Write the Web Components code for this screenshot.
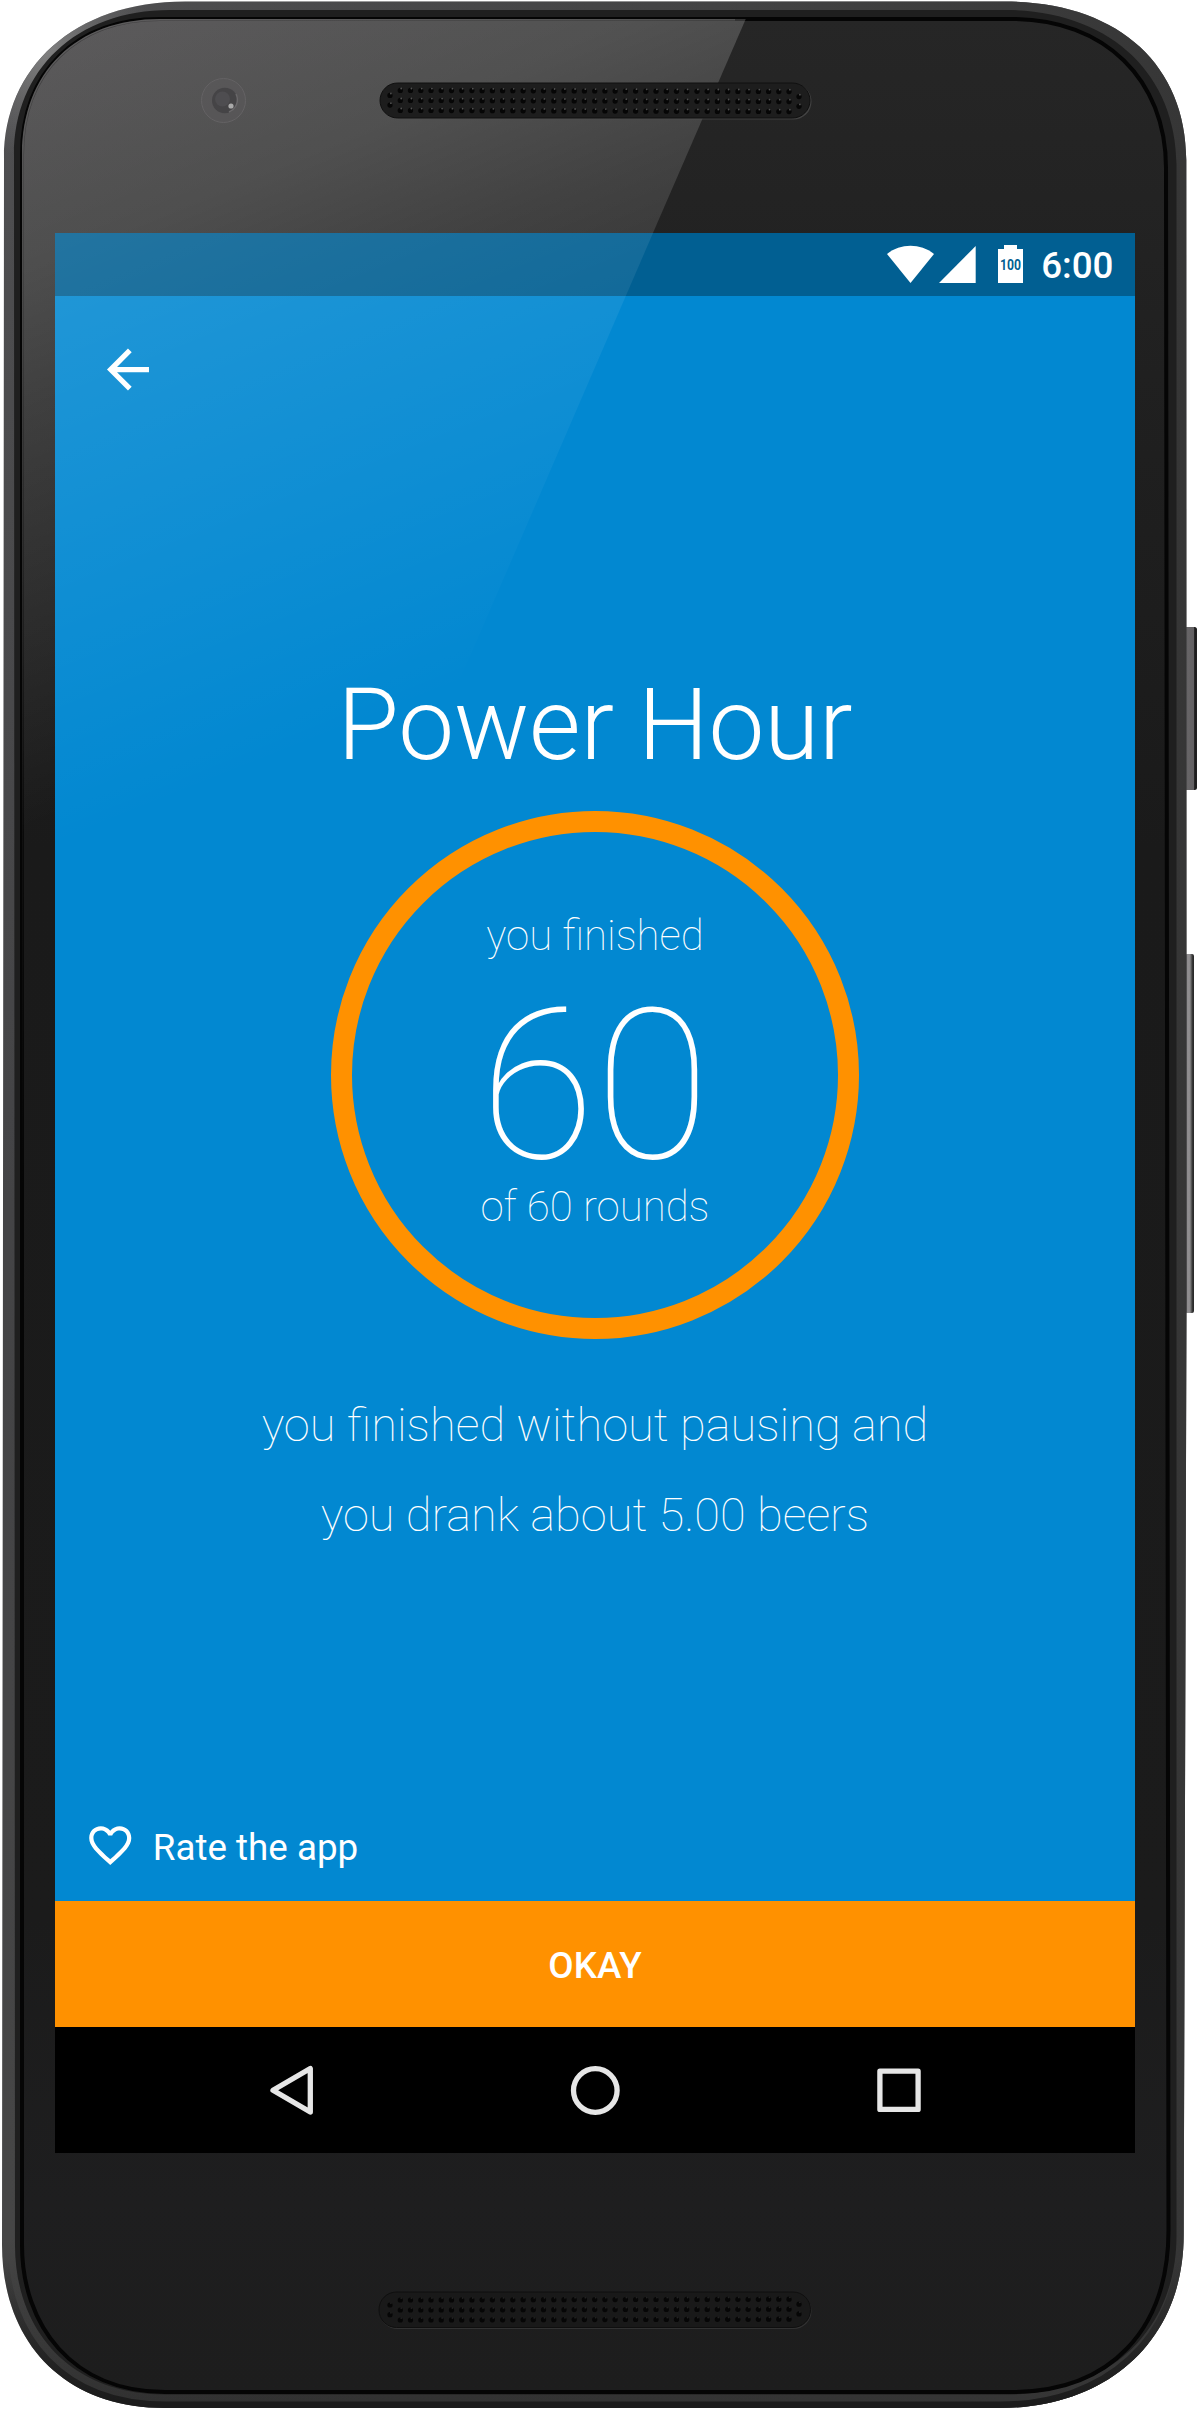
<!DOCTYPE html>
<html lang="en">
<head>
<meta charset="utf-8">
<title>Power Hour</title>
<style>
  html, body { margin: 0; padding: 0; background: #fff; }
  body { width: 1198px; height: 2409px; overflow: hidden; font-family: Roboto, "Noto Sans", sans-serif; color: #fff; }
</style>
</head>
<body>
<phone-frame>
  <app-screen>
    <status-bar time="6:00" level="100"></status-bar>
    <app-content>
      <back-button></back-button>
      <page-title>Power Hour</page-title>
      <round-ring>
        <span slot="before">you finished</span>
        <span slot="count">60</span>
        <span slot="after">of 60 rounds</span>
      </round-ring>
      <summary-lines>
        <div>you finished without pausing and</div>
        <div>you drank about 5.00 beers</div>
      </summary-lines>
      <rate-link>Rate the app</rate-link>
    </app-content>
    <okay-button>OKAY</okay-button>
    <nav-bar></nav-bar>
  </app-screen>
</phone-frame>
<script>
  const define = (name, html) => {
    const tpl = document.createElement('template');
    tpl.innerHTML = html;
    customElements.define(name, class extends HTMLElement {
      constructor() {
        super();
        this.attachShadow({ mode: 'open' }).append(tpl.content.cloneNode(true));
        this.shadowRoot.querySelectorAll('[data-attr]').forEach(n => {
          n.textContent = this.getAttribute(n.dataset.attr);
        });
      }
    });
  };

  /* Perforated grille: 39 columns of three holes, with a pair at each end. */
  const grille = (y, tilt, light) => {
    let s = '';
    const hole = (x, cy) => {
      s += `<circle cx="${x.toFixed(1)}" cy="${cy.toFixed(1)}" r="2.6" fill="#060606"/>` +
           `<circle cx="${(x + .9).toFixed(1)}" cy="${(cy - 1.9).toFixed(1)}" r=".9" fill="${light}"/>`;
    };
    for (let i = 0; i < 39; i++)
      for (let r = 0; r < 3; r++) hole(400.3 + i * 10.23, y + r * 10 + tilt * i / 38);
    hole(390, y + 5); hole(390, y + 14.7);
    hole(799, y + 5 + tilt); hole(799, y + 14.7 + tilt);
    return s;
  };

  define('phone-frame', `
    <style>
      :host { display: block; position: relative; box-sizing: border-box; width: 1198px; height: 2409px; padding: 233px 63px 256px 55px; }
      .art { position: absolute; left: 0; top: 0; }
      .shine { pointer-events: none; z-index: 2; }
      ::slotted(*) { position: relative; z-index: 1; }
    </style>
    <svg class="art" width="1198" height="2409" viewBox="0 0 1198 2409">
      <defs>
        <linearGradient id="rim" x1="0" y1="0" x2="0" y2="1">
          <stop offset="0" stop-color="#505052"/><stop offset=".5" stop-color="#444446"/><stop offset=".93" stop-color="#464646"/><stop offset="1" stop-color="#303030"/>
        </linearGradient>
        <linearGradient id="rimr" x1="0" y1="0" x2="1" y2="0">
          <stop offset="0" stop-color="#333" stop-opacity="0"/><stop offset=".6" stop-color="#363636" stop-opacity=".5"/><stop offset="1" stop-color="#363636"/>
        </linearGradient>
        <radialGradient id="corner" gradientUnits="userSpaceOnUse" cx="45" cy="50" r="110">
          <stop offset="0" stop-color="#8a8a8a" stop-opacity=".85"/><stop offset="1" stop-color="#777" stop-opacity="0"/>
        </radialGradient>
        <linearGradient id="face" x1="0" y1="0" x2="0" y2="1">
          <stop offset="0" stop-color="#262626"/><stop offset=".15" stop-color="#202020"/><stop offset=".35" stop-color="#1a1a1a"/><stop offset=".8" stop-color="#1b1b1b"/><stop offset=".92" stop-color="#1e1e1f"/><stop offset="1" stop-color="#1d1d1d"/>
        </linearGradient>
        <linearGradient id="glare" gradientUnits="userSpaceOnUse" x1="0" y1="0" x2="289" y2="725">
          <stop offset="0" stop-color="#fcf6fc" stop-opacity=".26"/><stop offset=".33" stop-color="#fff" stop-opacity=".2"/><stop offset=".5" stop-color="#fff" stop-opacity=".14"/><stop offset="1" stop-color="#fff" stop-opacity="0"/>
        </linearGradient>
        <linearGradient id="edge" gradientUnits="userSpaceOnUse" x1="0" y1="20" x2="0" y2="1200">
          <stop offset="0" stop-color="#fff" stop-opacity=".14"/><stop offset="1" stop-color="#fff" stop-opacity="0"/>
        </linearGradient>
        <linearGradient id="lower" gradientUnits="userSpaceOnUse" x1="0" y1="2260" x2="0" y2="2400">
          <stop offset="0" stop-color="#1c1c1c" stop-opacity="0"/><stop offset="1" stop-color="#1c1c1c"/>
        </linearGradient>
        <linearGradient id="pw"><stop offset="0" stop-color="#555"/><stop offset=".3" stop-color="#676567"/><stop offset=".75" stop-color="#626062"/><stop offset=".82" stop-color="#1a1a1a"/><stop offset="1" stop-color="#222"/></linearGradient>
        <linearGradient id="vl"><stop offset="0" stop-color="#5a5a5a"/><stop offset=".3" stop-color="#929092"/><stop offset=".55" stop-color="#8c8a8c"/><stop offset=".72" stop-color="#555"/><stop offset=".9" stop-color="#222"/><stop offset="1" stop-color="#333"/></linearGradient>
        <clipPath id="faceclip"><path d="M160 19 H1012 C1105 19 1166 80 1166 168 L1168.500 2230 C1168.500 2330 1110 2392 1012 2392 H165 C72 2392 22 2325 22 2245 L22 155 C22 72 76 19 160 19Z"/></clipPath>
        <clipPath id="bodyclip"><use href="#outer"/></clipPath>
      </defs>
      <rect x="1184" y="627" width="13" height="163" rx="2.500" fill="url(#pw)"/>
      <rect x="1185" y="954" width="9" height="359" rx="2" fill="url(#vl)"/>
      <path id="outer" d="M185 1.500 H1005 C1115 1.500 1186 62 1186.300 160 L1186.500 1300 L1183.700 2235 C1183.700 2342 1106 2408 1000 2408 H165 C62 2408 2 2340 2 2245 L4 158 C4 68 74 1.500 185 1.500Z" fill="url(#rim)"/>
      <path d="M185 1.500 H1005 C1115 1.500 1186 62 1186.300 160 L1186.500 1300 L1183.700 2235 C1183.700 2342 1106 2408 1000 2408 H165 C62 2408 2 2340 2 2245 L4 158 C4 68 74 1.500 185 1.500Z" fill="url(#rimr)"/>
      <path d="M185 1.500 H300 V200 H4 V158 C4 68 74 1.500 185 1.500Z" fill="url(#corner)"/>
      <g clip-path="url(#bodyclip)">
        <path d="M2 2245 C2 2340 62 2408 165 2408 H1000 C1106 2408 1183.700 2342 1183.700 2235" fill="none" stroke="url(#lower)" stroke-width="13"/>
      </g>
      <path d="M170 10 H1005 C1108 10 1176 72 1176.500 165 L1176.500 2235 C1176.500 2335 1104 2394.500 1006 2394.500 H165 C70 2394.500 15 2330 15 2245 L14 155 C14 70 76 10 170 10Z" fill="#1f1f1f"/>
      <path d="M160 19 H1012 C1105 19 1166 80 1166 168 L1168.500 2230 C1168.500 2330 1110 2392 1012 2392 H165 C72 2392 22 2325 22 2245 L22 155 C22 72 76 19 160 19Z" fill="url(#face)" stroke="#050505" stroke-width="4"/>
      <g clip-path="url(#faceclip)">
        <path d="M0 0 H754 L381 860 H0Z" fill="url(#glare)"/>
        <path d="M735 19.500 H160 C76 19.500 22.500 72 22.500 155 V1200" fill="none" stroke="url(#edge)" stroke-width="2"/>
      </g>
      <circle cx="223.500" cy="100.500" r="22" fill="#5a585a" fill-opacity=".6" stroke="#646264" stroke-width="1"/>
      <circle cx="224.800" cy="100.500" r="12.800" fill="#454446"/>
      <circle cx="222.500" cy="99" r="7.500" fill="#4e4d50"/>
      <path d="M229 112 A13 13 0 0 0 236 94" fill="none" stroke="#6a686a" stroke-width="1.500"/>
      <circle cx="231" cy="106" r="2.600" fill="#aaa"/>
      <rect x="380.500" y="83.500" width="431" height="36" rx="18" fill="#555" opacity=".6"/>
      <rect x="380" y="83" width="430" height="35" rx="17.500" fill="#1d1d1d" stroke="#101010" stroke-width="1"/>
      <rect x="379.500" y="2293" width="432" height="36" rx="18" fill="#3a3a3a" opacity=".7"/>
      <rect x="379" y="2292" width="431.500" height="35.500" rx="17.500" fill="#191919" stroke="#0f0f0f" stroke-width="1"/>
      ${grille(90.4, 1.2, '#505050')}
      ${grille(2300, -.8, '#222')}
    </svg>
    <slot></slot>
    <svg class="art shine" width="1198" height="2409" viewBox="0 0 1198 2409">
      <defs><linearGradient id="sg" gradientUnits="userSpaceOnUse" x1="0" y1="0" x2="300" y2="752">
        <stop offset=".28" stop-color="#fff" stop-opacity=".135"/><stop offset=".66" stop-color="#fff" stop-opacity=".062"/><stop offset="1" stop-color="#fff" stop-opacity="0"/>
      </linearGradient></defs>
      <path d="M55 233 H653 L382 860 H55Z" fill="url(#sg)"/>
    </svg>
  `);

  define('app-screen', `
    <style>
      :host { display: flex; flex-direction: column; width: 1080px; height: 1920px; background: #0288d1; }
      slot { display: contents; }
    </style><slot></slot>`);

  define('status-bar', `
    <style>
      :host { display: flex; justify-content: flex-end; align-items: flex-start; flex: none; height: 63px; box-sizing: border-box; padding: 12px 21.500px 0 0; background: #015f92; color: #fff; }
      svg { display: block; flex: none; }
      .signal { margin-left: 4.500px; }
      .battery { margin-left: 22.500px; }
      .lv { font: 700 14px Roboto, sans-serif; fill: #015f92; }
      .time { margin-left: 18px; padding-top: 1px; font-weight: 500; font-size: 36.750px; line-height: 40px; }
    </style>
    <svg width="47" height="38" viewBox="0 0 47 38"><path d="M23.500 38 L0 9 C7 3.500 15 .8 23.500 .8 S40 3.500 47 9Z" fill="#fff"/></svg>
    <svg class="signal" width="37" height="38" viewBox="0 0 37 38"><path d="M0 38 L36.700 1 V38Z" fill="#fff"/></svg>
    <svg class="battery" width="25" height="38" viewBox="0 0 25 38"><path d="M6 0 H19 V4 H25 V38 H0 V4 H6Z" fill="#fff"/><text class="lv" x="2" y="24.500" textLength="21" lengthAdjust="spacingAndGlyphs" data-attr="level"></text></svg>
    <span class="time" data-attr="time"></span>`);

  define('app-content', `
    <style>
      :host { display: flex; flex-direction: column; align-items: center; flex: 1; min-height: 0; }
      slot { display: contents; }
      ::slotted(back-button), ::slotted(rate-link) { align-self: flex-start; }
    </style><slot></slot>`);

  define('back-button', `
    <style>:host { display: block; padding: 42px 0 0 42px; } svg { display: block; }</style>
    <svg width="63" height="63" viewBox="0.200 0 24 24" fill="#fff"><path d="M20 11H7.830l5.590-5.590L12 4l-8 8 8 8 1.410-1.410L7.830 13H20v-2z"/></svg>`);

  define('page-title', `
    <style>:host { display: block; margin-top: 264.600px; font-weight: 300; font-size: 99.750px; line-height: 118px; letter-spacing: -.15px; white-space: nowrap; }</style><slot></slot>`);

  define('round-ring', `
    <style>
      :host { display: flex; flex-direction: column; align-items: center; flex: none; box-sizing: border-box; width: 528px; height: 528px; margin-top: 27.400px; padding-top: 78.600px; border: 21px solid #ff9100; border-radius: 50%; font-weight: 100; font-size: 42px; line-height: 50px; white-space: nowrap; }
      .count { margin: 30.500px 0 .500px; font-size: 210px; line-height: 190px; }
    </style>
    <div><slot name="before"></slot></div>
    <div class="count"><slot name="count"></slot></div>
    <div><slot name="after"></slot></div>`);

  define('summary-lines', `
    <style>:host { display: block; margin-top: 41.300px; text-align: center; font-weight: 100; font-size: 47px; line-height: 90px; white-space: nowrap; }</style><slot></slot>`);

  define('rate-link', `
    <style>
      :host { display: flex; align-items: flex-start; gap: 17px; margin-top: auto; padding: 0 0 30.500px 30.300px; font-size: 36.750px; line-height: 50px; }
      svg { display: block; }
      span { padding-top: 3px; height: 47px; }
    </style>
    <svg width="50.500" height="50.500" viewBox="0 0 24 24" fill="#fff"><path d="M16.500 3c-1.740 0-3.410.81-4.500 2.090C10.910 3.810 9.240 3 7.500 3 4.420 3 2 5.420 2 8.500c0 3.780 3.400 6.860 8.550 11.540L12 21.350l1.450-1.320C18.600 15.360 22 12.280 22 8.500 22 5.420 19.580 3 16.500 3zm-4.400 15.550l-.1.100-.1-.1C7.140 14.240 4 11.390 4 8.500 4 6.500 5.500 5 7.500 5c1.540 0 3.040.99 3.570 2.360h1.870C13.460 5.990 14.960 5 16.500 5c2 0 3.500 1.500 3.500 3.500 0 2.890-3.140 5.740-7.900 10.050z"/></svg>
    <span><slot></slot></span>`);

  define('okay-button', `
    <style>:host { display: flex; align-items: center; justify-content: center; flex: none; box-sizing: border-box; height: 126px; padding-top: 3px; background: #ff9100; font-weight: 500; font-size: 36.750px; line-height: 42px; }</style><slot></slot>`);

  define('nav-bar', `
    <style>
      :host { display: flex; justify-content: space-between; align-items: center; flex: none; box-sizing: border-box; height: 126px; padding: 0 211px; background: #000; }
      svg { display: block; fill: none; stroke: #e6e6e6; stroke-width: 5.300; stroke-linejoin: round; }
    </style>
    <svg width="50" height="50" viewBox="0 0 50 50"><path d="M44.300 3.500 V47 L7 25.300Z"/></svg>
    <svg width="50" height="50" viewBox="0 0 50 50"><circle cx="25.300" cy="25.500" r="21.800"/></svg>
    <svg width="50" height="50" viewBox="0 0 50 50"><rect x="5.900" y="6.200" width="38.200" height="38.200"/></svg>`);
</script>
</body>
</html>
